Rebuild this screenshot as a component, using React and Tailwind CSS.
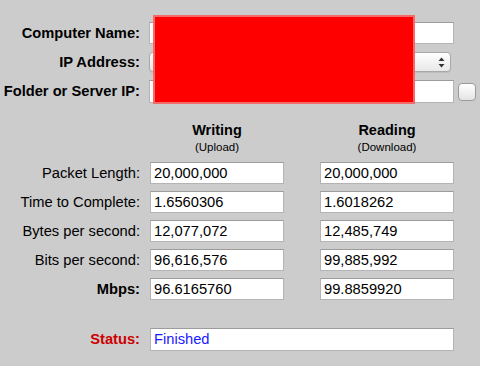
import React from "react";

const baris = [
  { label: "Packet Length:", tulis: "20,000,000", baca: "20,000,000" },
  { label: "Time to Complete:", tulis: "1.6560306", baca: "1.6018262" },
  { label: "Bytes per second:", tulis: "12,077,072", baca: "12,485,749" },
  { label: "Bits per second:", tulis: "96,616,576", baca: "99,885,992" },
  { label: "Mbps:", tulis: "96.6165760", baca: "99.8859920", tebal: true },
];

function Kotak({ children, className = "", warna = "text-black" }) {
  return (
    <div
      className={`flex h-[22px] items-center border border-[#b4b4b4] border-t-[#9c9c9c] bg-white pl-[3px] text-[14.7px] leading-none ${warna} ${className}`}
    >
      {children}
    </div>
  );
}

function Pilihan() {
  return (
    <div className="flex h-[20px] w-[302px] items-center justify-end rounded-[4px] border border-[#a8a8a8] bg-gradient-to-b from-white to-[#e8e8e8] pr-[5px] shadow-[0_1px_0_rgba(0,0,0,0.08)]">
      <svg width="7" height="11" viewBox="0 0 7 11">
        <path d="M3.5 0.5 L6.5 4 L0.5 4 Z" fill="#333" />
        <path d="M3.5 10.5 L6.5 7 L0.5 7 Z" fill="#333" />
      </svg>
    </div>
  );
}

export default function App() {
  return (
    <div className="relative h-[366px] w-[480px] overflow-hidden bg-[#cccccc] font-['Liberation_Sans',Arial,sans-serif] text-black">
      {/* bagian atas */}
      <div className="flex flex-col gap-[8px] pt-[22px]">
        <div className="flex items-center">
          <div className="w-[140px] text-right text-[14.7px] font-bold leading-none">
            Computer Name:
          </div>
          <Kotak className="ml-[9px] w-[305px]" />
        </div>
        <div className="flex items-center">
          <div className="w-[140px] text-right text-[14.7px] font-bold leading-none">
            IP Address:
          </div>
          <div className="ml-[9px]">
            <Pilihan />
          </div>
        </div>
        <div className="flex items-center">
          <div className="w-[140px] text-right text-[14.7px] font-bold leading-none">
            Folder or Server IP:
          </div>
          <Kotak className="ml-[9px] h-[23px] w-[305px]" />
          <div className="ml-[4px] h-[18px] w-[18px] rounded-[4px] border border-[#9a9a9a] bg-gradient-to-b from-white to-[#e4e4e4]" />
        </div>
      </div>

      {/* judul kolom */}
      <div className="mt-[18px] flex">
        <div className="w-[150px]" />
        <div className="flex w-[134px] flex-col items-center">
          <div className="text-[14.5px] font-bold leading-[18px]">Writing</div>
          <div className="mt-[1px] text-[11.5px] leading-[14px]">(Upload)</div>
        </div>
        <div className="ml-[36px] flex w-[134px] flex-col items-center">
          <div className="text-[14.5px] font-bold leading-[18px]">Reading</div>
          <div className="mt-[1px] text-[11.5px] leading-[14px]">(Download)</div>
        </div>
      </div>

      {/* tabel hasil */}
      <div className="mt-[8px] flex flex-col gap-[7px]">
        {baris.map(({ label, tulis, baca, tebal }) => (
          <div key={label} className="flex items-center">
            <div
              className={`w-[140px] text-right text-[14.7px] leading-none ${
                tebal ? "font-bold" : "font-normal"
              }`}
            >
              {label}
            </div>
            <Kotak className="ml-[10px] w-[134px]">{tulis}</Kotak>
            <Kotak className="ml-[36px] w-[134px]">{baca}</Kotak>
          </div>
        ))}
      </div>

      {/* status */}
      <div className="mt-[28px] flex items-center">
        <div className="w-[140px] text-right text-[14.7px] font-bold leading-none text-[#cc0000]">
          Status:
        </div>
        <Kotak className="ml-[10px] h-[23px] w-[304px]" warna="text-[#1a1aff]">
          Finished
        </Kotak>
      </div>

      {/* tutup merah */}
      <div className="absolute left-[153px] top-[15px] h-[89px] w-[262px] border-2 border-[#f46a6a] bg-[#ff0000]" />
    </div>
  );
}
